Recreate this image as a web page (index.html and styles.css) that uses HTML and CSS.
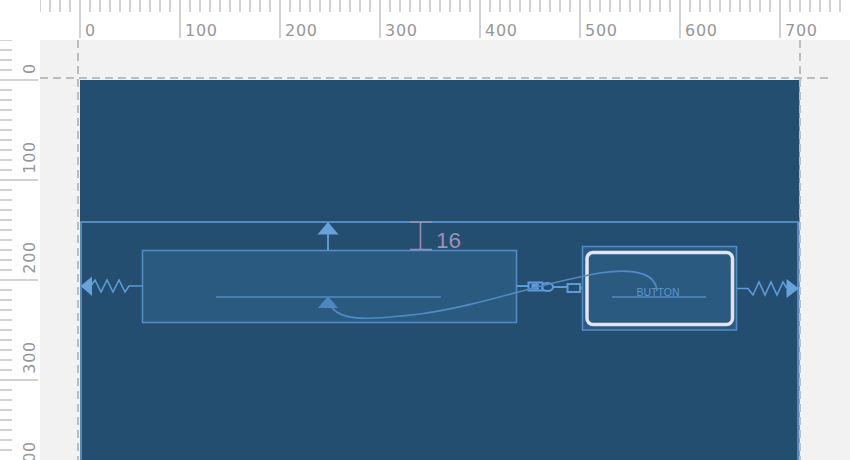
FILE: index.html
```html
<!DOCTYPE html>
<html>
<head>
<meta charset="utf-8">
<link rel="stylesheet" href="styles.css">
</head>
<body>
<div class="app">
  <div class="corner"></div>
  <div class="hruler">
    <div class="hcell"><span>0</span></div>
    <div class="hcell"><span>100</span></div>
    <div class="hcell"><span>200</span></div>
    <div class="hcell"><span>300</span></div>
    <div class="hcell"><span>400</span></div>
    <div class="hcell"><span>500</span></div>
    <div class="hcell"><span>600</span></div>
    <div class="hcell"><span>700</span></div>
  </div>
  <div class="vruler">
    <div class="vcell first"><span>0</span></div>
    <div class="vcell"><span>100</span></div>
    <div class="vcell"><span>200</span></div>
    <div class="vcell"><span>300</span></div>
    <div class="vcell"><span>400</span></div>
  </div>
  <div class="canvas">
    <svg class="surface" width="810" height="420" viewBox="40 40 810 420">
      <rect class="screen" x="80" y="80" width="719.5" height="380"/>
      <g class="guides">
        <path d="M40 78H833"/>
        <path d="M78 40V460"/>
        <path d="M800 40V460"/>
      </g>
      <rect class="layout" x="81" y="222" width="717" height="250"/>

      <!-- TextView -->
      <rect class="widget" x="142.5" y="250.5" width="374" height="72"/>
      <path class="line" d="M216 297H441"/>
      <path class="line-bright" d="M328 233V250"/>
      <path class="arrow-top" d="M328 222L317.5 234.5H338.5Z"/>
      <path class="arrow-base" d="M328 296L318 308H338Z"/>

      <!-- left spring -->
      <path class="spring" d="M142 286H129L125 292L119 280L113 292L107 280L101 292L95 280L91 286"/>
      <path class="arrow-top" d="M80.5 286L92 276.5V296Z"/>

      <!-- margin indicator -->
      <g class="margin">
        <path d="M410 222H432M420.5 222V249.5M410 249.5H432"/>
      </g>
      <text class="margin-text" x="436" y="248">16</text>

      <!-- chain -->
      <g class="chain">
        <path d="M516.5 286H528M553 287H567M580 288H582"/>
        <rect x="528.5" y="282.5" width="14" height="8"/>
        <path d="M539 284.5H532.5V288.5H539M532.5 286.5H538"/>
        <ellipse cx="547.5" cy="287" rx="5.5" ry="4"/>
        <rect x="567.5" y="284" width="12.5" height="8"/>
      </g>

      <!-- Button -->
      <rect class="widget" x="582.5" y="246.5" width="154" height="83.5"/>
      <rect class="button" x="587" y="252.5" width="145.5" height="72" rx="6"/>
      <text class="button-text" x="658" y="296">BUTTON</text>
      <path class="line" d="M612 297H706"/>

      <!-- baseline constraint curve -->
      <path class="curve" d="M330 305C340 322 368 320 420 314C480 306 540 283 600 273C640 267 656 276 657 291"/>

      <!-- right spring -->
      <path class="spring" d="M737 288.5H748L753 295L759 282L765 295L771 282L777 295L783 282L787 288.5"/>
      <path class="arrow-top" d="M799 288.5L786.5 279V298Z"/>
    </svg>
  </div>
</div>
</body>
</html>
```

FILE: styles.css
```css
html, body {
  margin: 0;
  padding: 0;
  background: #ffffff;
}

body {
  width: 850px;
  height: 460px;
  overflow: hidden;
  font-family: "DejaVu Sans", sans-serif;
}

.app {
  display: grid;
  grid-template-columns: 40px 810px;
  grid-template-rows: 40px 420px;
}

.corner {
  background: #ffffff;
}

/* top ruler */
.hruler {
  display: flex;
  padding-left: 39px;
  background-image: repeating-linear-gradient(to right, #d2d2d2 0 2px, transparent 2px 10px);
  background-size: 100% 12px;
  background-repeat: no-repeat;
  background-position: -1px 0;
  overflow: hidden;
}

.hcell {
  flex: 0 0 100px;
  box-sizing: border-box;
  height: 38px;
  border-left: 2px solid #d2d2d2;
  padding: 23px 0 0 4px;
}

.hcell span,
.vcell span {
  display: block;
  font-size: 16px;
  line-height: 16px;
  letter-spacing: 0.7px;
  color: #979797;
}

/* left ruler */
.vruler {
  display: flex;
  flex-direction: column;
  background-image: repeating-linear-gradient(to bottom, #d2d2d2 0 2px, transparent 2px 10px);
  background-size: 12px 100%;
  background-repeat: no-repeat;
  background-position: 0 -1px;
  overflow: hidden;
}

.vcell {
  flex: 0 0 100px;
  box-sizing: border-box;
  width: 38px;
  border-bottom: 2px solid #d2d2d2;
  display: flex;
  justify-content: flex-end;
  align-items: flex-end;
}

.vcell.first {
  flex-basis: 41px;
}

.vcell span {
  writing-mode: vertical-rl;
  transform: rotate(180deg);
  margin: 0 0 5px 0;
}

/* design surface */
.canvas {
  background: #f2f2f2;
  overflow: hidden;
}

.surface {
  display: block;
}

.screen {
  fill: #234e6f;
}

.guides path {
  stroke: #bdbdbd;
  stroke-width: 2;
  stroke-dasharray: 8 5;
  fill: none;
}

.layout {
  fill: none;
  stroke: #5e9ad5;
  stroke-width: 1.6;
}

.widget {
  fill: #2a5a80;
  stroke: #528bc2;
  stroke-width: 1.6;
}

.line {
  stroke: #528bc2;
  stroke-width: 1.6;
  fill: none;
}

.line-bright {
  stroke: #67a2da;
  stroke-width: 1.8;
  fill: none;
}

.arrow-top {
  fill: #67a2da;
}

.arrow-base {
  fill: #4e86bd;
}

.curve {
  fill: none;
  stroke: #528bc2;
  stroke-width: 1.6;
}

.spring {
  fill: none;
  stroke: #5e9ad5;
  stroke-width: 1.6;
  stroke-linejoin: miter;
}

.margin path {
  stroke: #9a8fb3;
  stroke-width: 1.6;
  fill: none;
}

.margin-text {
  font-family: "Liberation Sans", sans-serif;
  font-size: 22.5px;
  fill: #9a91b8;
}

.chain path,
.chain rect,
.chain ellipse {
  fill: none;
  stroke: #5e9ad5;
  stroke-width: 2;
}

.button {
  fill: #2a5a80;
  stroke: #e4e4f6;
  stroke-width: 3.5;
}

.button-text {
  font-family: "Liberation Sans", sans-serif;
  font-size: 10.5px;
  fill: #5e95cc;
  text-anchor: middle;
}
```
